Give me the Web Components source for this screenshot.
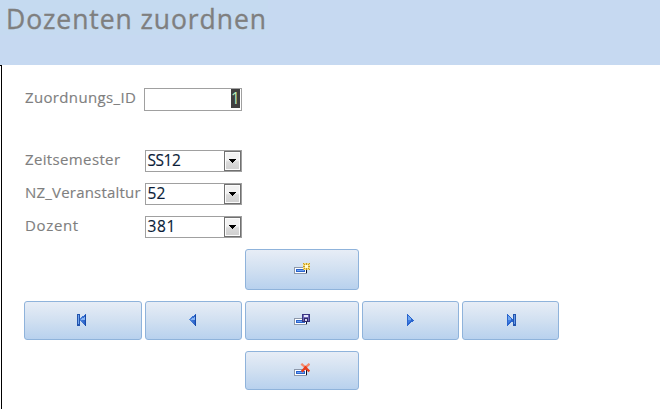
<!DOCTYPE html>
<html lang="de">
<head>
<meta charset="utf-8">
<title>Dozenten zuordnen</title>
<style>
html, body { margin: 0; width: 660px; height: 409px; overflow: hidden; background: #fff; }
body { font-family: "Open Sans", "Noto Sans", sans-serif; color: #7f7f7f; }
</style>
</head>
<body>
<assign-form></assign-form>
<script>
const make = (host, html) => {
  const t = document.createElement('template');
  t.innerHTML = html;
  host.attachShadow({ mode: 'open' }).append(t.content.cloneNode(true));
};

customElements.define('form-header', class extends HTMLElement {
  constructor() {
    super();
    make(this, `<style>
      :host { display: block; height: 65px; background: #c6d9f1; }
      h1 { margin: 0; width: 262px; height: 35px; padding-left: 6px; background: #c5daf0;
        font-size: 26.5px; font-weight: 400; line-height: 39px; letter-spacing: .92px; white-space: nowrap; -webkit-text-stroke: .35px #7f7f7f; }
    </style><h1><slot></slot></h1>`);
  }
});

customElements.define('form-row', class extends HTMLElement {
  constructor() {
    super();
    make(this, `<style>
      :host { display: grid; grid-template-columns: 116px 1fr; column-gap: 4px; width: 217px; height: 22px; }
      .label { font-size: 15px; line-height: 20px; margin-top: -1px; letter-spacing: var(--track, 0); white-space: nowrap; -webkit-text-stroke: .15px #7f7f7f; }
      ::slotted(*) { min-width: 0; }
    </style><div class="label">${this.getAttribute('label')}</div><slot></slot>`);
  }
});

customElements.define('text-field', class extends HTMLElement {
  constructor() {
    super();
    make(this, `<style>
      :host { display: flex; justify-content: flex-end; box-sizing: border-box; height: 23px; margin-left: -1px;
        border: 1px solid #a0a0a0; background: #fff; padding: 0 1px 0 0; }
      span { width: 9px; height: 19px; background: #404040; color: #b9ecb9; font: 15.5px/18px "Open Sans", sans-serif; text-align: center; }
    </style><span><slot></slot></span>`);
  }
});

customElements.define('combo-field', class extends HTMLElement {
  constructor() {
    super();
    make(this, `<style>
      :host { display: flex; box-sizing: border-box; height: 22px; border: 1px solid #a0a0a0; background: #fff; }
      span { flex: 1; padding-left: 1.5px; color: #0a1c38; font-size: 15.5px; line-height: 18px; letter-spacing: var(--track, -.2px); -webkit-text-stroke: .15px #0a1c38; }
      i { box-sizing: border-box; width: 17px; height: 20px; border: 1px solid #707070; box-shadow: inset 0 0 0 1px #fcfcfc;
        background: linear-gradient(#f2f2f2 45%, #dadada 55%, #cfcfcf); display: grid; place-items: center; }
      svg { display: block; }
    </style><span><slot></slot></span>
    <i><svg width="7" height="4" shape-rendering="crispEdges"><path d="M0 0h7v1H6v1H5v1H4v1H3V3H2V2H1V1H0z"/></svg></i>`);
  }
});

const record = y => `<g transform="translate(0 ${y})"><path fill="#8d98aa" d="M0 0h13v7H0z"/><path fill="#07122c" d="M1 6h12V1h-1v5H1z"/><path fill="#fff" d="M1 1h11v5H1z"/><path fill="#2b62cc" d="M2 2h9v3H2z"/><path fill="#6ba3f2" d="M3 3h7v1H3z"/></g>`;
const glyphs = {
  add: record(4) + `<path fill="#f3dc7a" d="M9 0h7v7H9z"/><path fill="#c99a22" d="M9 0h1v1H9zM12 0h1v2h-1zM15 0h1v1h-1zM10 1h1v1h-1zM14 1h1v1h-1zM9 3h2v1H9zM14 3h2v1h-2zM10 5h1v1h-1zM14 5h1v1h-1zM12 5h1v2h-1zM9 6h1v1H9zM15 6h1v1h-1z"/><path fill="#fffbd5" d="M11 2h3v3h-3z"/>`,
  save: record(4) + `<path fill="#3b3681" d="M8 0h8v8H8z"/><path fill="#6f68b8" d="M9 1h6v6H9z"/><path fill="#e7e8fb" d="M10 1h4v2h-4z"/><path fill="#302968" d="M10 4h4v4h-4z"/><path fill="#d8d8f0" d="M11 5h2v2h-2z"/>`,
  del: record(6) + `<g shape-rendering="auto" fill="none" stroke-width="2.3"><path stroke="#f58a6c" d="M7.3 .8L11 4M15.5 .8L11.5 4.4"/><path stroke="#ea3c1a" d="M10.5 3.6L15.4 8.4M12.5 3.6L7.7 8.6"/></g>`,
  prev: `<path fill="url(#b)" d="M6 0h1v12H6v-1H5v-1H4V9H3V8H2V7H1V6H0V5h1V4h1V3h1V2h2V1h1z"/><path fill="#174aa7" d="M6 1h1v11H6z"/><path fill="#86b4f4" d="M5 3h1v3H2V5h1V4h2z"/>`,
  next: `<path fill="#2a65ce" d="M0 0h1v1h1v1h1v1h1v1h1v1h1v1h1v1H6v1H4v1H3v1H2v1H1v1H0z"/><path fill="#70a7f0" d="M1 2h1v1h1v1h1v2H1z"/><path fill="#3e7de4" d="M1 6h3v1H3v1H2v1H1z"/>`
};
glyphs.first = `<g transform="translate(2 0)">${glyphs.prev}</g><path fill="#2254ae" d="M0 0h3v12H0z"/><path fill="#70a4ed" d="M1 1h1v9H1z"/>`;
glyphs.last = glyphs.next + `<path fill="#2254ae" d="M6 0h3v12H6z"/><path fill="#6499e8" d="M7 1h1v9H7z"/>`;
const sizes = { add: [16, 11], save: [16, 11], del: [16, 13], prev: [7, 12], next: [7, 12], first: [9, 12], last: [9, 12] };

customElements.define('nav-button', class extends HTMLElement {
  constructor() {
    super();
    const kind = this.getAttribute('icon');
    const [w, h] = sizes[kind];
    make(this, `<style>
      :host { display: grid; place-content: start; box-sizing: border-box; border: 1px solid #8fb3db; border-radius: 3px;
        background: linear-gradient(#e7edf6, #d1e0f1 50%, #b8d1ee); padding: var(--inset); }
      svg { display: block; }
    </style><svg width="${w}" height="${h}" viewBox="0 0 ${w} ${h}" shape-rendering="crispEdges">
      <defs><linearGradient id="b"><stop stop-color="#5b8fe0"/><stop offset="1" stop-color="#2059c4"/></linearGradient></defs>${glyphs[kind]}</svg>`);
  }
});

customElements.define('assign-form', class extends HTMLElement {
  constructor() {
    super();
    make(this, `<style>
      :host { display: block; width: 660px; height: 409px; }
      main { box-sizing: border-box; height: 344px; display: flex; }
      .rail { width: 2px; box-sizing: border-box; border-top: 1px solid #000; border-right: 1px solid #000; }
      .content { padding: 23px 0 0 23px; }
      .combos { display: grid; row-gap: 11px; margin-top: 40px; }
      .nav { display: grid; grid-template-columns: 118px 97px 114px 97px 97px; grid-template-rows: 41px 39px 39px;
        gap: 11px 3px; margin: 11px 0 0 -1px; }
      .mid { grid-column: 3; }
    </style>
    <form-header>Dozenten zuordnen</form-header>
    <main><div class="rail"></div><div class="content">
      <form-row label="Zuordnungs_ID" style="--track:.35px"><text-field>1</text-field></form-row>
      <div class="combos">
        <form-row label="Zeitsemester" style="--track:.36px"><combo-field style="--track:-.45px">SS12</combo-field></form-row>
        <form-row label="NZ_Veranstaltur" style="--track:.2px"><combo-field>52</combo-field></form-row>
        <form-row label="Dozent" style="--track:.65px"><combo-field>381</combo-field></form-row>
      </div>
      <div class="nav">
        <nav-button class="mid" icon="add" style="--inset:13px 0 0 48px"></nav-button>
        <nav-button icon="first" style="grid-column:1;--inset:12px 0 0 52px"></nav-button>
        <nav-button icon="prev" style="--inset:12px 0 0 43px"></nav-button>
        <nav-button icon="save" style="--inset:12px 0 0 48px"></nav-button>
        <nav-button icon="next" style="--inset:12px 0 0 44px"></nav-button>
        <nav-button icon="last" style="--inset:12px 0 0 44px"></nav-button>
        <nav-button class="mid" icon="del" style="--inset:11px 0 0 48px"></nav-button>
      </div>
    </div></main>`);
  }
});
</script>
</body>
</html>
